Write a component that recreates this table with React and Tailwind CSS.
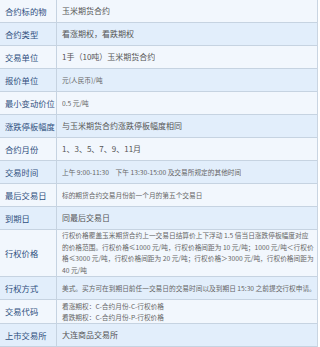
import React from "react";

const rows = [
  { label: "合约标的物", value: "玉米期货合约", size: "big" },
  { label: "合约类型", value: "看涨期权，看跌期权", size: "big" },
  { label: "交易单位", value: "1手（10吨）玉米期货合约", size: "big" },
  { label: "报价单位", value: "元(人民币)/吨", size: "small" },
  { label: "最小变动价位", value: "0.5 元/吨", size: "small" },
  { label: "涨跌停板幅度", value: "与玉米期货合约涨跌停板幅度相同", size: "big" },
  { label: "合约月份", value: "1、3、5、7、9、11月", size: "big" },
  { label: "交易时间", value: "上午 9:00-11:30　下午 13:30-15:00 及交易所规定的其他时间", size: "small" },
  { label: "最后交易日", value: "标的期货合约交易月份前一个月的第五个交易日", size: "small" },
  { label: "到期日", value: "同最后交易日", size: "big" },
  {
    label: "行权价格",
    value:
      "行权价格覆盖玉米期货合约上一交易日结算价上下浮动 1.5 倍当日涨跌停板幅度对应的价格范围。行权价格≤1000 元/吨，行权价格间距为 10 元/吨；1000 元/吨＜行权价格≤3000 元/吨，行权价格间距为 20 元/吨；行权价格＞3000 元/吨，行权价格间距为 40 元/吨",
    size: "small",
    h: "h-[46px]",
  },
  { label: "行权方式", value: "美式。买方可在到期日前任一交易日的交易时间以及到期日 15:30 之前提交行权申请。", size: "small" },
  {
    label: "交易代码",
    value: ["看涨期权：C-合约月份-C-行权价格", "看跌期权：C-合约月份-P-行权价格"],
    size: "small",
    h: "h-[23px]",
  },
  { label: "上市交易所", value: "大连商品交易所", size: "big" },
];

export default function App() {
  return (
    <div
      className="w-[320px] h-[347px] bg-white overflow-hidden"
      style={{ fontFamily: '"Noto Sans CJK SC", "Noto Sans", sans-serif' }}
    >
      <div className="w-[318px] border-r border-[#c9d5e2]">
        {rows.map((r, i) => (
          <div
            key={i}
            className={`flex border-b border-[#c6d3e1] ${i % 2 === 0 ? "bg-[#f2f7fd]" : "bg-[#e2eefb]"}`}
          >
            <div
              className={`w-[57px] shrink-0 border-r border-[#c6d3e1] flex items-center pl-[5px] text-[8.3px] text-[#2f4f7d] whitespace-nowrap ${r.h || "h-[22px]"}`}
            >
              {r.label}
            </div>
            <div
              className={`flex-1 flex items-center pl-[5px] pr-[2px] ${r.h || "h-[22px]"} ${
                r.size === "big" ? "text-[8px] text-[#555]" : "text-[6.7px] text-[#666]"
              }`}
            >
              {Array.isArray(r.value) ? (
                <div className="leading-[11px]">
                  {r.value.map((v, j) => (
                    <div key={j} className="whitespace-nowrap">{v}</div>
                  ))}
                </div>
              ) : (
                <div className={r.h ? "leading-[11.5px]" : "whitespace-nowrap overflow-hidden"}>{r.value}</div>
              )}
            </div>
          </div>
        ))}
      </div>
    </div>
  );
}
